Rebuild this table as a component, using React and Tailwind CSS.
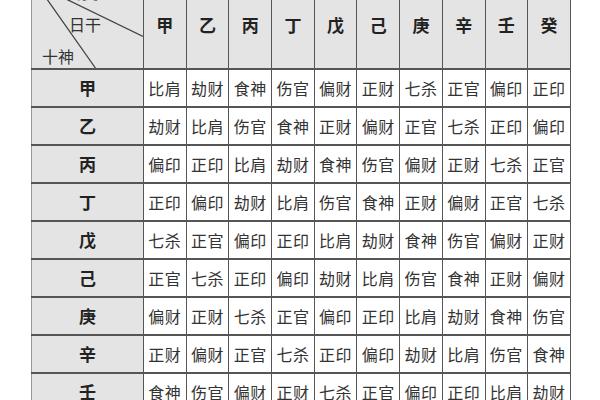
import React from "react";

const stems = ["甲", "乙", "丙", "丁", "戊", "己", "庚", "辛", "壬", "癸"];

const rows = [
  ["甲", ["比肩", "劫财", "食神", "伤官", "偏财", "正财", "七杀", "正官", "偏印", "正印"]],
  ["乙", ["劫财", "比肩", "伤官", "食神", "正财", "偏财", "正官", "七杀", "正印", "偏印"]],
  ["丙", ["偏印", "正印", "比肩", "劫财", "食神", "伤官", "偏财", "正财", "七杀", "正官"]],
  ["丁", ["正印", "偏印", "劫财", "比肩", "伤官", "食神", "正财", "偏财", "正官", "七杀"]],
  ["戊", ["七杀", "正官", "偏印", "正印", "比肩", "劫财", "食神", "伤官", "偏财", "正财"]],
  ["己", ["正官", "七杀", "正印", "偏印", "劫财", "比肩", "伤官", "食神", "正财", "偏财"]],
  ["庚", ["偏财", "正财", "七杀", "正官", "偏印", "正印", "比肩", "劫财", "食神", "伤官"]],
  ["辛", ["正财", "偏财", "正官", "七杀", "正印", "偏印", "劫财", "比肩", "伤官", "食神"]],
  ["壬", ["食神", "伤官", "偏财", "正财", "七杀", "正官", "偏印", "正印", "比肩", "劫财"]],
];

const font = { fontFamily: '"Noto Sans CJK SC", "Noto Sans", sans-serif' };

export default function App() {
  return (
    <div className="w-[600px] h-[400px] overflow-hidden bg-white" style={font}>
      <table className="ml-[31px] -mt-[20px] w-[540px] border-collapse table-fixed text-[#333]">
        <colgroup>
          <col className="w-[112px]" />
          {stems.map((s) => (
            <col key={s} />
          ))}
        </colgroup>
        <thead>
          <tr className="h-[89px] bg-[#e4e4e4]">
            <th className="relative p-0 border-x border-b-2 border-[#555] border-l-[#999] font-normal">
              <svg className="absolute inset-0 w-full h-full" viewBox="0 0 112 89" preserveAspectRatio="none">
                <line x1="5" y1="5" x2="112" y2="57" stroke="#444" strokeWidth="1.3" />
                <line x1="5" y1="5" x2="64" y2="89" stroke="#444" strokeWidth="1.3" />
              </svg>
              <span className="absolute left-[34px] top-[4px] text-[16px] leading-none">日支</span>
              <span className="absolute left-[37px] top-[36px] text-[16px] leading-none">日干</span>
              <span className="absolute left-[10px] top-[68px] text-[16px] leading-none">十神</span>
            </th>
            {stems.map((s) => (
              <th
                key={s}
                className="p-0 pt-[32px] align-top border-x border-b-2 border-[#555] text-[17px] font-bold text-[#222]"
              >
                {s}
              </th>
            ))}
          </tr>
        </thead>
        <tbody>
          {rows.map(([label, cells]) => (
            <tr key={label} className="h-[38px]">
              <td className="p-0 bg-[#e4e4e4] border-x border-y-2 border-[#555] border-l-[#999] text-center text-[17px] font-bold text-[#222]">
                {label}
              </td>
              {cells.map((c, i) => (
                <td
                  key={i}
                  className="p-0 border-x border-y-2 border-[#555] text-center text-[16px] leading-none whitespace-nowrap tracking-[0.5px]"
                >
                  {c}
                </td>
              ))}
            </tr>
          ))}
        </tbody>
      </table>
    </div>
  );
}
